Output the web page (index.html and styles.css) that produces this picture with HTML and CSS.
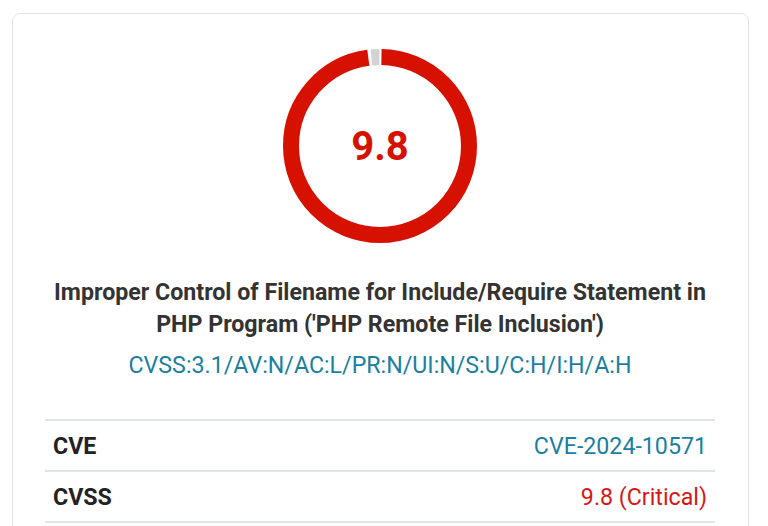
FILE: index.html
```html
<!DOCTYPE html>
<html lang="en">
<head>
    <meta charset="UTF-8">
    <meta name="viewport" content="width=device-width, initial-scale=1.0">
    <title>CVE-2024-10571</title>
    <link rel="stylesheet" href="styles.css">
</head>
<body>
    <div class="vuln-card">
        <div class="score-gauge">
            <svg width="194" height="194" viewBox="0 0 194 194">
                <g transform="rotate(-90 97 97)">
                    <circle class="gauge-rest" cx="97" cy="97" r="89" stroke-dasharray="8.2 1000" stroke-dashoffset="-549.5"></circle>
                    <circle class="gauge-value" cx="97" cy="97" r="89" stroke-dasharray="545 1000" stroke-dashoffset="-1.5"></circle>
                </g>
            </svg>
            <span class="score-value">9.8</span>
        </div>

        <h2 class="vuln-title">Improper Control of Filename for Include/Require Statement in PHP Program ('PHP Remote File Inclusion')</h2>
        <a class="vuln-vector" href="#">CVSS:3.1/AV:N/AC:L/PR:N/UI:N/S:U/C:H/I:H/A:H</a>

        <table class="vuln-table">
            <tr>
                <th>CVE</th>
                <td><a href="#">CVE-2024-10571</a></td>
            </tr>
            <tr>
                <th>CVSS</th>
                <td class="critical">9.8 (Critical)</td>
            </tr>
        </table>
    </div>
</body>
</html>
```

FILE: styles.css
```css
* {
    margin: 0;
    padding: 0;
    box-sizing: border-box;
}

body {
    font-family: Roboto, "Liberation Sans", Arial, sans-serif;
    background-color: #fff;
    padding: 13px 19px 0 12px;
}

.vuln-card {
    border: 1px solid #e3e3e3;
    border-radius: 8px;
    padding: 35px 33px 40px 32px;
    text-align: center;
}

.score-gauge {
    position: relative;
    width: 194px;
    height: 194px;
    margin: 0 auto;
}

.score-gauge svg {
    display: block;
}

.score-gauge circle {
    fill: none;
    stroke-width: 16;
}

.gauge-value {
    stroke: #d61100;
}

.gauge-rest {
    stroke: #d3d3d3;
}

.score-value {
    position: absolute;
    top: 0;
    left: 0;
    right: 0;
    bottom: 0;
    display: flex;
    align-items: center;
    justify-content: center;
    font-size: 40px;
    font-weight: bold;
    color: #d61100;
}

.vuln-title {
    margin-top: 33px;
    font-size: 23.2px;
    line-height: 32px;
    font-weight: bold;
    color: #333;
}

.vuln-vector {
    display: block;
    margin-top: 9px;
    font-size: 23.2px;
    line-height: 32px;
    color: #1a7fa3;
    text-decoration: none;
}

.vuln-table {
    width: 100%;
    margin-top: 38px;
    border-collapse: collapse;
    font-size: 23.2px;
}

.vuln-table th,
.vuln-table td {
    height: 51px;
    border-top: 2px solid #e1e5e9;
    border-bottom: 2px solid #e1e5e9;
    padding: 0 8px;
}

.vuln-table th {
    text-align: left;
    font-weight: bold;
    color: #222;
}

.vuln-table td {
    text-align: right;
}

.vuln-table a {
    color: #1a7fa3;
    text-decoration: none;
}

.critical {
    color: #d91616;
}
```
